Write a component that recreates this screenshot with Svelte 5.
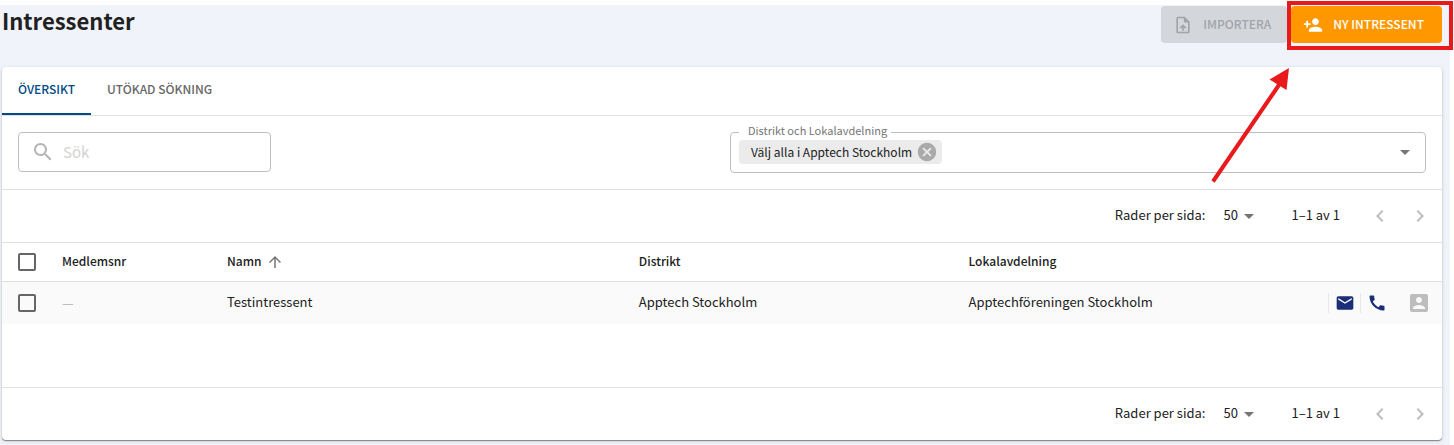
<script>
  let tab = $state('overview');
  let query = $state('');
  let scope = $state(['Välj alla i Apptech Stockholm']);
  const rows = [
    { nr: '—', name: 'Testintressent', district: 'Apptech Stockholm', branch: 'Apptechföreningen Stockholm' }
  ];
</script>

{#snippet icon(d, size = 24)}
  <svg class="icon" width={size} height={size} viewBox="0 0 24 24" aria-hidden="true"><path {d} /></svg>
{/snippet}

{#snippet pager(id)}
  <div class="pager">
    <label for={id}>Rader per sida:</label>
    <span class="size">
      <select {id}>
        <option>50</option>
        <option>100</option>
      </select>
      {@render icon('M7 10l5 5 5-5z')}
    </span>
    <span class="range">1–1 av 1</span>
    <button class="step" disabled aria-label="Föregående sida">{@render icon('M15.41 7.41 14 6l-6 6 6 6 1.41-1.41L10.83 12z')}</button>
    <button class="step" disabled aria-label="Nästa sida">{@render icon('M10 6 8.59 7.41 13.17 12l-4.58 4.59L10 18l6-6z')}</button>
  </div>
{/snippet}

<div class="page">
  <header>
    <h1>Intressenter</h1>
    <div class="actions">
      <button class="btn" disabled>
        {@render icon('M14 2H6c-1.1 0-2 .9-2 2v16c0 1.1.9 2 2 2h12c1.1 0 2-.9 2-2V8l-6-6zm4 18H6V4h7v5h5v11zM8 15.01l1.41 1.41L11 14.84V19h2v-4.16l1.59 1.59L16 15.01 12.01 11z', 20)}
        <span>IMPORTERA</span>
      </button>
      <button class="btn primary">
        {@render icon('M15 12c2.21 0 4-1.79 4-4s-1.79-4-4-4-4 1.79-4 4 1.79 4 4 4zm-9-2V7H4v3H1v2h3v3h2v-3h3v-2H6zm9 4c-2.67 0-8 1.34-8 4v2h16v-2c0-2.66-5.33-4-8-4z', 20)}
        <span>NY INTRESSENT</span>
      </button>
    </div>
    <svg class="callout" width="244" height="186" viewBox="0 0 244 186" aria-hidden="true">
      <rect x="79" y="3" width="162" height="45" fill="none" stroke="#e81a1c" stroke-width="4" />
      <path d="M3 181.500 71 82" stroke="#e81a1c" stroke-width="4" />
      <path d="M79 68 59.500 79.500 76.500 90z" fill="#e81a1c" />
    </svg>
  </header>

  <main class="card">
    <div class="tabs" role="tablist">
      <button role="tab" aria-selected={tab === 'overview'} onclick={() => (tab = 'overview')}>ÖVERSIKT</button>
      <button role="tab" aria-selected={tab === 'search'} onclick={() => (tab = 'search')}>UTÖKAD SÖKNING</button>
    </div>

    <div class="filters">
      <label class="search">
        {@render icon('M15.5 14h-.79l-.28-.27C15.41 12.59 16 11.11 16 9.500 16 5.910 13.090 3 9.500 3S3 5.910 3 9.500 5.910 16 9.500 16c1.610 0 3.090-.59 4.230-1.570l.27.28v.79l5 4.990L20.490 19l-4.990-5zm-6 0C7.010 14 5 11.990 5 9.500S7.010 5 9.500 5 14 7.010 14 9.500 11.990 14 9.500 14z')}
        <input type="text" placeholder="Sök" aria-label="Sök" bind:value={query} />
      </label>
      <fieldset>
        <legend>Distrikt och Lokalavdelning</legend>
        {#each scope as item}
          <span class="chip">
            {item}
            <button aria-label="Ta bort {item}" onclick={() => (scope = [])}>
              {@render icon('M12 2C6.470 2 2 6.470 2 12s4.470 10 10 10 10-4.470 10-10S17.530 2 12 2zm5 13.590L15.590 17 12 13.410 8.410 17 7 15.590 10.590 12 7 8.410 8.410 7 12 10.590 15.590 7 17 8.410 13.410 12 17 15.590z', 22)}
            </button>
          </span>
        {/each}
        <button class="open" aria-label="Öppna">{@render icon('M7 10l5 5 5-5z')}</button>
      </fieldset>
    </div>

    {@render pager('rows-top')}

    <div class="list">
      <table>
        <colgroup>
          <col class="c-check" /><col class="c-nr" /><col class="c-name" /><col class="c-district" /><col /><col class="c-tools" />
        </colgroup>
        <thead>
          <tr>
            <th><input type="checkbox" aria-label="Markera alla" /></th>
            <th>Medlemsnr</th>
            <th>
              <span class="sorted">Namn {@render icon('M4 12l1.410 1.410L11 7.830V20h2V7.830l5.580 5.590L20 12l-8-8-8 8z', 18)}</span>
            </th>
            <th>Distrikt</th>
            <th>Lokalavdelning</th>
            <th></th>
          </tr>
        </thead>
        <tbody>
          {#each rows as row}
            <tr>
              <td><input type="checkbox" aria-label="Markera {row.name}" /></td>
              <td class="empty">{row.nr}</td>
              <td>{row.name}</td>
              <td>{row.district}</td>
              <td>{row.branch}</td>
              <td class="tools">
                <div>
                  <button aria-label="E-post">{@render icon('M20 4H4c-1.100 0-1.990.9-1.990 2L2 18c0 1.100.9 2 2 2h16c1.100 0 2-.9 2-2V6c0-1.100-.9-2-2-2zm0 4l-8 5-8-5V6l8 5 8-5v2z', 20)}</button>
                  <button aria-label="Telefon">{@render icon('M20.010 15.380c-1.230 0-2.420-.2-3.530-.56-.35-.12-.74-.03-1.010.24l-1.570 1.970c-2.830-1.350-5.480-3.900-6.890-6.830l1.950-1.660c.27-.28.35-.67.24-1.020-.37-1.110-.56-2.300-.56-3.530 0-.54-.45-.99-.99-.99H4.190C3.650 3 3 3.240 3 3.990 3 13.280 10.730 21 20.010 21c.71 0 .99-.63.99-1.180v-3.450c0-.54-.45-.99-.99-.99z', 20)}</button>
                  <button class="muted" aria-label="Kontakt">{@render icon('M3 5v14c0 1.100.89 2 2 2h14c1.100 0 2-.9 2-2V5c0-1.100-.9-2-2-2H5c-1.110 0-2 .9-2 2zm12 4c0 1.660-1.340 3-3 3s-3-1.340-3-3 1.340-3 3-3 3 1.340 3 3zm-9 8c0-2 4-3.100 6-3.100s6 1.100 6 3.100v1H6v-1z')}</button>
                </div>
              </td>
            </tr>
          {/each}
        </tbody>
      </table>
    </div>

    {@render pager('rows-bottom')}
  </main>
</div>

<style>
  :global(body) {
    margin: 0;
    background: #fff;
  }
  .page {
    margin: 5px 4px 0 0;
    padding: 1px 8px 5px 2px;
    background: #f0f3f9;
    color: #212121;
    font: 400 13px/20px "Noto Sans CJK SC", "Noto Sans CJK JP", sans-serif;
  }
  .page * {
    box-sizing: border-box;
  }
  button,
  input,
  select {
    margin: 0;
    padding: 0;
    border: 0;
    background: none;
    color: inherit;
    font: inherit;
  }
  .icon {
    display: block;
    flex: none;
    fill: currentColor;
  }
  header {
    position: relative;
    display: flex;
    justify-content: space-between;
    height: 61px;
  }
  h1 {
    margin: 0;
    font-size: 22px;
    line-height: 28px;
    font-weight: 700;
  }
  .actions {
    display: flex;
    align-items: flex-start;
    gap: 4px;
  }
  .btn {
    display: flex;
    align-items: center;
    gap: 10px;
    height: 37px;
    padding: 0 16px 0 12px;
    border-radius: 4px;
    background: #d3d7dc;
    color: #a1a4a9;
    font-size: 12px;
    font-weight: 500;
  }
  .btn span {
    padding-bottom: 2px;
  }
  .btn.primary {
    padding-right: 18px;
    background: #ff9800;
    color: #fff;
  }
  .callout {
    position: absolute;
    top: -6px;
    right: -12px;
    pointer-events: none;
  }
  .card {
    border-radius: 4px;
    background: #fff;
    box-shadow: 0 1px 1px #808388, 0 1px 4px #0002;
  }
  .tabs {
    display: flex;
    border-bottom: 1px solid #e0e0e0;
  }
  .tabs button {
    height: 48px;
    padding: 0 16px 2px;
    border-bottom: 2px solid transparent;
    color: #666;
    font-size: 12px;
    font-weight: 500;
  }
  .tabs button[aria-selected="true"] {
    border-color: #004a87;
    color: #004a87;
  }
  .filters {
    display: flex;
    align-items: flex-start;
    justify-content: space-between;
    padding: 16px;
    border-bottom: 1px solid #e0e0e0;
  }
  .search {
    display: flex;
    align-items: center;
    gap: 8px;
    width: 253px;
    height: 40px;
    padding: 0 12px;
    border: 1px solid #c0c0c0;
    border-radius: 4px;
    color: #b5b5b5;
  }
  .search input {
    min-width: 0;
    flex: 1;
    outline: 0;
    color: #212121;
    font-size: 15px;
  }
  .search input::placeholder {
    color: #d3d3d3;
    opacity: 1;
  }
  fieldset {
    display: flex;
    align-items: center;
    width: calc(50% - 8px);
    height: 48px;
    margin: -7px 0 0;
    padding: 0 8px 7px;
    border: 1px solid #c0c0c0;
    border-radius: 4px;
  }
  legend {
    padding: 0 4px 3px 9px;
    color: #757575;
    font-size: 11px;
    line-height: 11px;
  }
  .chip {
    display: flex;
    align-items: center;
    gap: 4px;
    height: 24px;
    padding: 0 4px 0 12px;
    border-radius: 4px;
    background: #ebebeb;
    font-size: 12px;
  }
  .chip button {
    color: #aaa;
  }
  .open {
    margin-left: auto;
    color: #757575;
  }
  .pager {
    display: flex;
    align-items: center;
    justify-content: flex-end;
    height: 52px;
    padding-right: 2px;
  }
  .pager label,
  .pager select,
  .range {
    padding-bottom: 2px;
  }
  .size {
    display: flex;
    align-items: center;
    margin: 0 30px 0 18px;
  }
  .size select {
    width: 38px;
    margin-right: -24px;
    appearance: none;
  }
  .size .icon {
    color: #757575;
    pointer-events: none;
  }
  .range {
    margin-right: 20px;
  }
  .step {
    display: grid;
    place-items: center;
    width: 40px;
    height: 40px;
    color: #bdbdbd;
  }
  .list {
    min-height: 146px;
    border: solid #e0e0e0;
    border-width: 1px 0;
  }
  table {
    width: 100%;
    border-collapse: collapse;
    table-layout: fixed;
  }
  .c-check {
    width: 44px;
  }
  .c-nr {
    width: 165px;
  }
  .c-name {
    width: 28.600%;
  }
  .c-district {
    width: 22.900%;
  }
  .c-tools {
    width: 114px;
  }
  th,
  td {
    height: 38px;
    padding: 0 16px 2px;
    text-align: left;
    font-weight: 400;
  }
  th {
    border-bottom: 1px solid #e0e0e0;
    font-size: 12px;
    font-weight: 500;
  }
  td {
    height: 43px;
    background: #fafafa;
  }
  th:first-child,
  td:first-child {
    padding: 0 0 0 16px;
  }
  td.empty {
    padding-bottom: 0;
    color: #bdbdbd;
    font-weight: 500;
  }
  .sorted {
    display: flex;
    align-items: center;
    gap: 4px;
  }
  .sorted .icon {
    margin-top: 2px;
    color: #757575;
  }
  input[type="checkbox"] {
    display: block;
    width: 18px;
    height: 18px;
    border: 2px solid #666;
    border-radius: 2px;
    appearance: none;
  }
  input[type="checkbox"]:checked {
    background: #004a87;
  }
  td.tools {
    padding: 0;
  }
  .tools div {
    display: flex;
    align-items: center;
  }
  .tools button {
    height: 20px;
    padding: 0 5px 0 6px;
    border-left: 1px solid #e8e8e8;
    color: #1a2f77;
  }
  .tools .muted {
    display: flex;
    align-items: center;
    padding-left: 15px;
    border: 0;
    color: #bdbdbd;
  }
</style>
